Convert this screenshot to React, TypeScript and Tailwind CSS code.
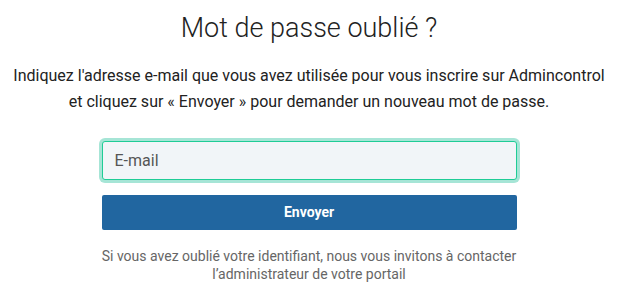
import React, { useState } from "react";

function ForgotPassword() {
  const [email, setEmail] = useState("");

  return (
    <div className="w-[618px] flex flex-col items-center pt-[12px] font-['Roboto',sans-serif]">
      <h1 className="text-[27px] leading-[32px] font-light text-[#222]">
        Mot de passe oublié ?
      </h1>
      <p className="mt-[19px] text-[16px] leading-[26px] text-[#222] text-center">
        Indiquez l'adresse e-mail que vous avez utilisée pour vous inscrire sur
        Admincontrol
        <br />
        et cliquez sur « Envoyer » pour demander un nouveau mot de passe.
      </p>
      <form
        className="mt-[26px] w-[415px] flex flex-col"
        onSubmit={(e) => e.preventDefault()}
      >
        <input
          type="email"
          value={email}
          onChange={(e) => setEmail(e.target.value)}
          placeholder="E-mail"
          className="h-[39px] px-[12px] rounded-[3px] border border-[#1fcc96] bg-[#f1f5f8] text-[16px] text-[#333] placeholder:text-[#555] outline-none ring-[3px] ring-[#a6e5d6]"
        />
        <button
          type="submit"
          className="mt-[15px] h-[35px] rounded-[2px] bg-[#2166a0] text-white text-[14px] font-bold"
        >
          Envoyer
        </button>
      </form>
      <p className="mt-[17px] text-[14px] leading-[18px] text-[#666] text-center">
        Si vous avez oublié votre identifiant, nous vous invitons à contacter
        <br />
        l’administrateur de votre portail
      </p>
    </div>
  );
}

export default function App() {
  return <ForgotPassword />;
}
